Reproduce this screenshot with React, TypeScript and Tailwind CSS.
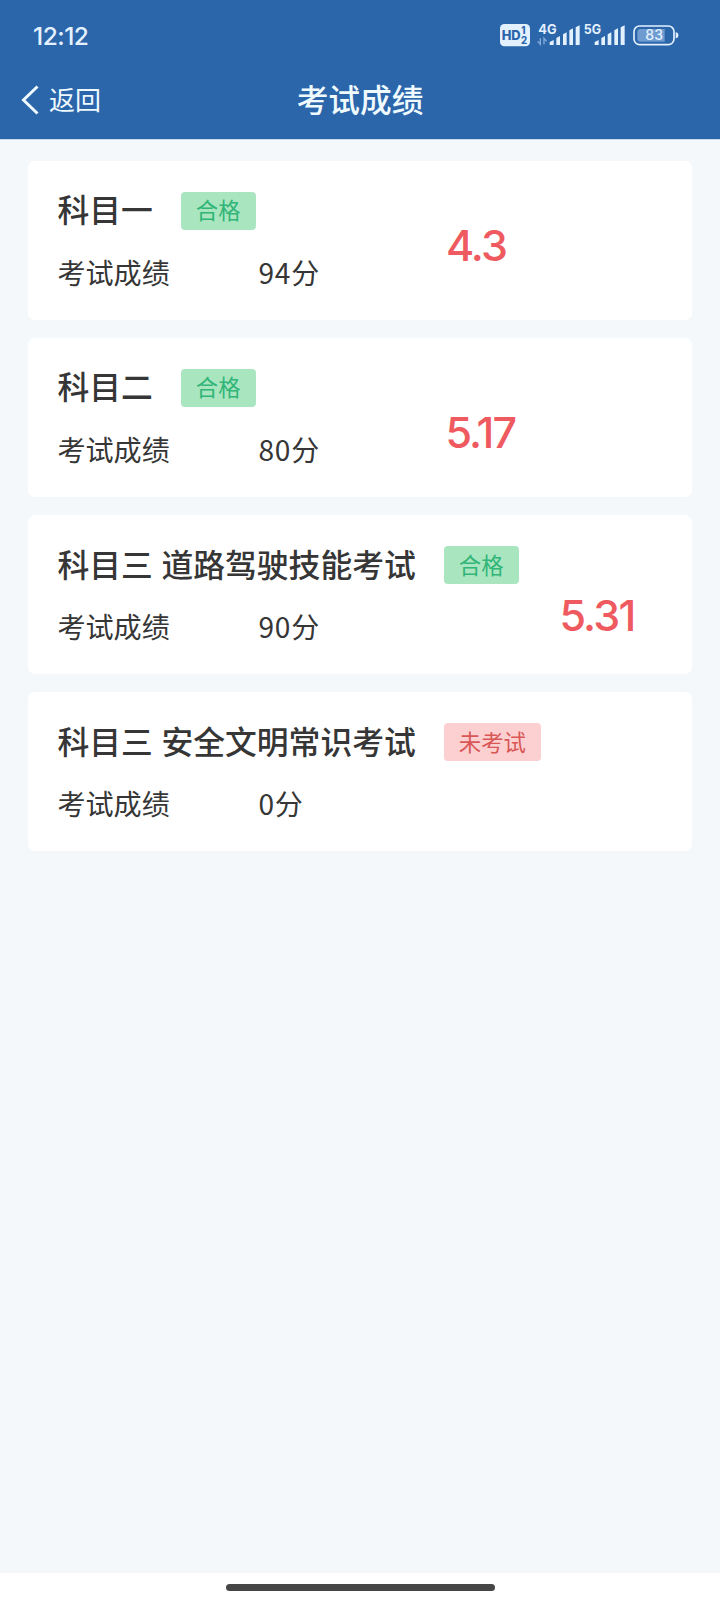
import clsx from 'clsx';

interface ExamResult {
  id: number;
  title: string;
  score: number;
  passed: boolean;
  status: string;
  note?: string;
  notePosition?: string;
}

const results: ExamResult[] = [
  { id: 1, title: '科目一', score: 94, passed: true, status: '合格', note: '4.3', notePosition: 'left-[417.5px] top-[58px]' },
  { id: 2, title: '科目二', score: 80, passed: true, status: '合格', note: '5.17', notePosition: 'left-[417px] top-[68px]' },
  { id: 3, title: '科目三 道路驾驶技能考试', score: 90, passed: true, status: '合格', note: '5.31', notePosition: 'left-[531px] top-[74px]' },
  { id: 4, title: '科目三 安全文明常识考试', score: 0, passed: false, status: '未考试' },
];

function StatusIcons() {
  return (
    <svg width="220" height="60" viewBox="0 0 660 180" fill="#e3f1ff" className="font-['Inter',sans-serif]">
      {/* HD badge */}
      <rect x="60" y="42" width="90" height="67" rx="13" />
      <g fill="#2b65aa" fontWeight="800">
        <text x="65" y="89" fontSize="39" textLength="57" lengthAdjust="spacingAndGlyphs">HD</text>
        <text x="124" y="73" fontSize="29">1</text>
        <text x="123" y="101" fontSize="29">2</text>
      </g>

      {/* 4G */}
      <text x="175" y="73" fontSize="38" fontWeight="700" textLength="55" lengthAdjust="spacingAndGlyphs">4G</text>
      <path d="M181 85v18l-8-9M192 103V85l8 9" fill="none" stroke="#86add9" strokeWidth="4" />
      <path d="M209 105v-9l12-6v15zM229 105V84l11-6v27zM249 105V73l11-6v38zM268 105V61l11-6v50zM287 105V52l12-6v59z" />

      {/* 5G */}
      <text x="311" y="73" fontSize="38" fontWeight="700" textLength="52" lengthAdjust="spacingAndGlyphs">5G</text>
      <path d="M344 105v-9l12-6v15zM364 105V84l11-6v27zM383 105V73l11-6v38zM403 105V61l11-6v50zM422 105V52l12-6v59z" />

      {/* Battery */}
      <rect x="462" y="48" width="120" height="56" rx="17" fill="none" stroke="#e3f1ff" strokeWidth="5" />
      <path d="M481 57h73v38h-73q-9 0-9-9V66q0-9 9-9z" fill="#6f9bd0" />
      <path d="M587 67q8 0 8 9t-8 9z" />
      <text x="496" y="91" fontSize="42" fontWeight="500" textLength="53" lengthAdjust="spacingAndGlyphs">83</text>
    </svg>
  );
}

function Header() {
  return (
    <header className="h-[139px] bg-[#2b65aa] text-[#effaff]">
      <div className="flex h-[62px] items-start justify-between pl-[33px] pr-5">
        <span className="pt-[18px] font-['Inter','Liberation_Sans',sans-serif] text-[24.5px] leading-[36px] font-medium tracking-[-0.5px] text-[#e3f1ff]">
          12:12
        </span>
        <div className="pt-[10px]">
          <StatusIcons />
        </div>
      </div>
      <div className="grid h-[77px] grid-cols-3 items-start">
        <button className="flex h-[76px] items-center pl-5 text-[26px]">
          <svg width="20" height="32" viewBox="0 0 20 32" fill="none" stroke="currentColor" strokeWidth="3">
            <path d="M17.5 2.5 3.5 16l14 13.5" />
          </svg>
          <span className="ml-[9px] pb-[3px]">返回</span>
        </button>
        <h1 className="text-center text-[31.7px] leading-[72px] font-medium whitespace-nowrap">考试成绩</h1>
      </div>
    </header>
  );
}

function ResultCard({ result }: { result: ExamResult }) {
  return (
    <div className="relative h-[159.2px] rounded-[7px] bg-white px-[29px] pt-[31px] text-[#363636]">
      <div className="flex h-[38px] items-center">
        <h2 className="pb-[3px] text-[31.8px] font-medium [word-spacing:1.5px]">{result.title}</h2>
        <span
          className={clsx(
            'ml-7 flex h-[38px] items-center rounded-[4px] px-[15px] pb-px text-[22.4px]',
            result.passed ? 'bg-[#a9e6c0] text-[#31b578]' : 'bg-[#fcd0d0] text-[#d95757]'
          )}
        >
          {result.status}
        </span>
      </div>
      <div className="mt-[22px] flex h-[40px] items-center text-[28.1px]">
        <span className="w-[201px]">考试成绩</span>
        <span>
          <span className="tracking-[0.8px]">{result.score}</span>分
        </span>
      </div>

      {/* Handwritten date placed over the card */}
      {result.note && (
        <span
          className={clsx(
            "absolute font-['Inter',sans-serif] text-[43px] leading-[52px] font-medium tracking-[-1.8px] text-[#ee5a60]",
            result.notePosition
          )}
        >
          {result.note}
        </span>
      )}
    </div>
  );
}

export default function App() {
  return (
    <div className="flex h-[1601px] w-[720px] flex-col overflow-hidden bg-[#f4f8fa] font-['Noto_Sans_CJK_SC',sans-serif]">
      <Header />
      <main className="flex flex-1 flex-col gap-[18px] border-t border-[#c5ddf0] px-[28.4px] pt-[20.6px]">
        {results.map((result) => (
          <ResultCard key={result.id} result={result} />
        ))}
      </main>
      <footer className="flex h-[28px] justify-center bg-white pt-[11px]">
        <div className="h-[7px] w-[269px] rounded-full bg-[#464646]" />
      </footer>
    </div>
  );
}
